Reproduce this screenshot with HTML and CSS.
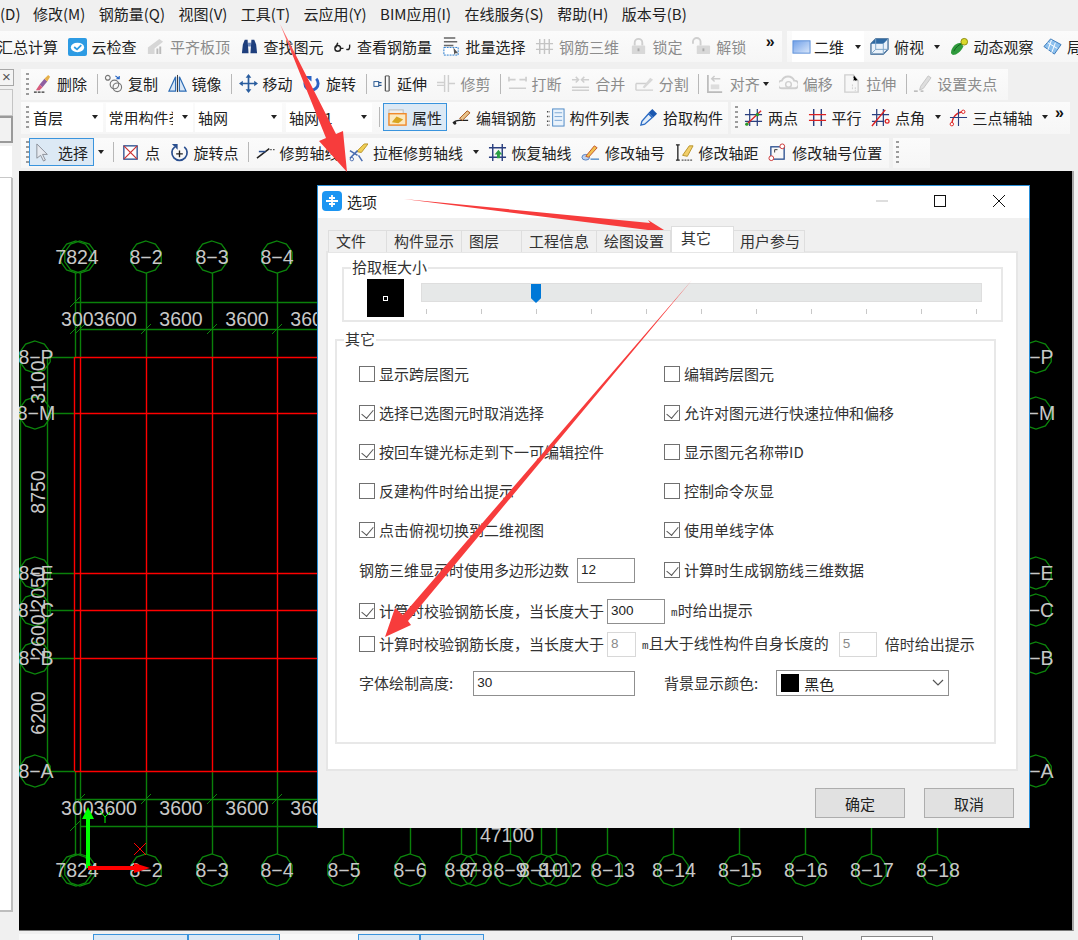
FILE: index.html
```html
<!DOCTYPE html>
<html lang="zh-CN">
<head>
<meta charset="utf-8">
<title>选项</title>
<link rel="stylesheet" href="styles.css">
</head>
<body>
<svg class="defs" width="0" height="0" aria-hidden="true">
  <symbol id="i-cloud" viewBox="0 0 20 20"><rect x="0" y="1" width="20" height="19" rx="2" fill="#2d9be3"/><ellipse cx="10" cy="11" rx="7" ry="5" fill="#fff"/><path d="M6.500 10.500l3 2.500 4.500-4.500" fill="none" stroke="#2d9be3" stroke-width="1.800"/></symbol>
  <symbol id="i-flush" viewBox="0 0 20 20"><path d="M2 11l12-9 4 3-9 7v6H2z" fill="#d6d6d6"/><path d="M11 18v-6h2v6zm3 0v-8h2v8z" fill="#bbb"/></symbol>
  <symbol id="i-binoc" viewBox="0 0 20 20"><path d="M2 17l1-9 2-5h3l1 14zM18 17l-1-9-2-5h-3l-1 14z" fill="#1f3f7d"/><rect x="8.500" y="6" width="3" height="4" fill="#6b86b8"/></symbol>
  <symbol id="i-glass" viewBox="0 0 20 20"><circle cx="5" cy="12" r="3" fill="none" stroke="#222" stroke-width="1.500"/><path d="M14 13c3 1 4-1 3.500-5M3 11l2-5M8 12h3" fill="none" stroke="#222" stroke-width="1.500"/></symbol>
  <symbol id="i-batch" viewBox="0 0 20 20"><path d="M2 1h12M2 5h14M2 9h10" stroke="#666" stroke-width="1.500"/><rect x="2" y="11" width="15" height="8" fill="#fff" stroke="#2277cc" stroke-dasharray="2 1"/><path d="M12 11l5 6-3 0-1 2z" fill="#555"/></symbol>
  <symbol id="i-grid3d" viewBox="0 0 20 20"><path d="M1 7h18M1 13h18M5 2v16M10 2v16M15 2v16" stroke="#c4c4c4" stroke-width="1.500"/></symbol>
  <symbol id="i-lock" viewBox="0 0 20 20"><path d="M6 9V6a4 4 0 018 0v3" fill="none" stroke="#cfcfcf" stroke-width="2"/><rect x="3" y="9" width="14" height="9" rx="1" fill="#d8d8d8"/><rect x="9" y="12" width="2" height="3" fill="#aaa"/></symbol>
  <symbol id="i-unlock" viewBox="0 0 20 20"><path d="M1 7V5a4 4 0 018 0v4" fill="none" stroke="#cfcfcf" stroke-width="2"/><rect x="5" y="9" width="14" height="9" rx="1" fill="#d8d8d8"/><rect x="11" y="12" width="2" height="3" fill="#aaa"/></symbol>
  <symbol id="i-2d" viewBox="0 0 20 20"><defs><linearGradient id="g2d" x1="0" y1="0" x2="1" y2="1"><stop offset="0" stop-color="#6f9fe8"/><stop offset="1" stop-color="#dbe8fb"/></linearGradient></defs><rect x="1" y="4" width="18" height="13" fill="url(#g2d)" stroke="#5b8ed8"/></symbol>
  <symbol id="i-cube" viewBox="0 0 20 20"><path d="M1 7l5-5h13v11l-5 5H1z" fill="#eaf2fa" stroke="#2d5c8c" stroke-width="1.200"/><path d="M1 7l5-5h13l-5 5z" fill="#2f6aa3"/><path d="M14 7v11M14 7l5-5M1 18l5-5h13M6 2v11" fill="none" stroke="#7aa3c7"/></symbol>
  <symbol id="i-orbit" viewBox="0 0 20 20"><path d="M1 17c0-6 5-11 11-11l2 4c-2 5-7 9-11 9z" fill="#2f9a3c"/><path d="M4 15c2-4 5-7 9-8" stroke="#0f5f1c" fill="none"/><circle cx="15" cy="5" r="3.500" fill="#d9d92a" stroke="#8a8a10"/></symbol>
  <symbol id="i-persp" viewBox="0 0 20 20"><path d="M1 10l7-8 11 6-7 10z" fill="#8cc0ee" stroke="#3a78b8"/><path d="M5 6l10 6M9 3l-4 11M13 6l-4 11" stroke="#fff"/></symbol>
  <symbol id="i-del" viewBox="0 0 20 20"><path d="M1 19h11" stroke="#333" stroke-width="1.300" stroke-dasharray="3 1"/><path d="M7 11l5-6 3 3-5 6z" fill="#8f5fa0"/><path d="M12 5l4-4 2 2-3 5z" fill="#e6b04a"/><path d="M3 17l4-6 3 3-3 3z" fill="#d75c7c"/></symbol>
  <symbol id="i-copy" viewBox="0 0 20 20"><circle cx="4" cy="4" r="2.500" fill="none" stroke="#777" stroke-width="1.200"/><circle cx="14" cy="14" r="4.500" fill="none" stroke="#777" stroke-width="1.200"/><circle cx="11" cy="11" r="4.500" fill="none" stroke="#777" stroke-width="1.200"/><path d="M12 2l4 3M16 2v3h-3" fill="none" stroke="#2060c0" stroke-width="1.200"/></symbol>
  <symbol id="i-mirror" viewBox="0 0 20 20"><path d="M10 1v18" stroke="#333"/><path d="M8 3L1 18h7z" fill="#d9e7f6" stroke="#2d6cb5" stroke-width="1.300"/><path d="M12 3l7 15h-7z" fill="#d9e7f6" stroke="#2d6cb5" stroke-width="1.300"/></symbol>
  <symbol id="i-move" viewBox="0 0 20 20"><path d="M10 2v16M2 10h16" stroke="#2a5d9e" stroke-width="1.800"/><path d="M10 0l3 4H7zM10 20l3-4H7zM0 10l4-3v6zM20 10l-4-3v6z" fill="#2a5d9e"/></symbol>
  <symbol id="i-rotate" viewBox="0 0 20 20"><path d="M5 5a7 7 0 1 0 10 0" fill="none" stroke="#2a62c4" stroke-width="3"/><path d="M3 2h7v6z" fill="#2a62c4"/></symbol>
  <symbol id="i-extend" viewBox="0 0 20 20"><path d="M1 9h8M1 12h8" stroke="#24558f" stroke-width="1.300"/><rect x="1" y="8" width="5" height="5" fill="#fff" stroke="#24558f"/><path d="M13 2v16M17 2v16" stroke="#555" stroke-width="1.300"/><path d="M13 2h4M13 18h4" stroke="#555"/></symbol>
  <symbol id="i-trim" viewBox="0 0 20 20"><path d="M8 1v18M12 1v18M0 9h8M0 12h8M12 10h7" stroke="#cfcfcf" stroke-width="1.500"/></symbol>
  <symbol id="i-break" viewBox="0 0 20 20"><path d="M1 6h7M12 6h7M1 15h18M1 3v5M19 3v5" stroke="#cfcfcf" stroke-width="1.800"/></symbol>
  <symbol id="i-merge" viewBox="0 0 20 20"><path d="M1 6h7M11 6h8M5 3l3 3-3 3M14 3l-3 3 3 3M1 14h18M1 17h18" fill="none" stroke="#cfcfcf" stroke-width="1.600"/></symbol>
  <symbol id="i-split" viewBox="0 0 20 20"><path d="M1 10h12M1 17h18M1 10v7" stroke="#cfcfcf" stroke-width="1.400"/><path d="M8 14l8-10 3 2-9 9z" fill="#d8d8d8"/></symbol>
  <symbol id="i-align" viewBox="0 0 20 20"><path d="M2 1v18h15" fill="none" stroke="#bbb" stroke-width="1.800"/><rect x="5" y="11" width="9" height="5" fill="#ddd"/><path d="M6 5h9M9 2L6 5l3 3" fill="none" stroke="#ccc" stroke-width="1.500"/></symbol>
  <symbol id="i-offset" viewBox="0 0 20 20"><path d="M3 15a4 4 0 010-8 7 7 0 0113 0 4 4 0 011 8z" fill="none" stroke="#cfcfcf" stroke-width="2"/><circle cx="10" cy="11" r="3" fill="none" stroke="#cfcfcf" stroke-width="1.500"/></symbol>
  <symbol id="i-stretch" viewBox="0 0 20 20"><path d="M3 1h9l5 6v12H3z" fill="#f7f7f7" stroke="#cfcfcf" stroke-width="1.400"/><path d="M12 1v6h5M11 11v6M14 14v4" stroke="#cfcfcf" stroke-dasharray="2 1"/></symbol>
  <symbol id="i-grip" viewBox="0 0 20 20"><path d="M1 18h4M8 18h3" stroke="#aaa" stroke-width="1.500"/><path d="M8 13l8-11 3 2-8 11-4 2z" fill="#dedede" stroke="#c4c4c4"/></symbol>
  <symbol id="i-prop" viewBox="0 0 20 20"><rect x="1" y="2" width="15" height="4" fill="#eee" stroke="#bbb"/><rect x="1" y="6" width="18" height="12" fill="#fbe9c2" stroke="#f08a2c" stroke-width="1.500"/><path d="M4 15l5-6 7 3-5 4z" fill="#d8a520"/></symbol>
  <symbol id="i-edit" viewBox="0 0 20 20"><path d="M1 16c2-3 5-3 7-3h9" fill="none" stroke="#222" stroke-width="1.500"/><path d="M8 11l8-8 3 2-8 8z" fill="#e8c38a" stroke="#a8551a"/><circle cx="3" cy="16" r="1.500" fill="#222"/></symbol>
  <symbol id="i-list" viewBox="0 0 20 20"><path d="M1 4h3M1 9h3M1 14h3M1 18h3" stroke="#444" stroke-width="1.500" stroke-dasharray="1.500 1"/><rect x="7" y="1" width="12" height="18" fill="#eaf3fc" stroke="#4a86c5"/><path d="M9 5h8M9 9h8M9 13h8" stroke="#7aa7d4"/></symbol>
  <symbol id="i-pick" viewBox="0 0 20 20"><path d="M2 18l1-4 7-8 4 4-8 7z" fill="#e4effa" stroke="#2c6cc4" stroke-width="1.400"/><path d="M10 5l4-4 5 5-4 4z" fill="#1c58b0"/></symbol>
  <symbol id="i-twopt" viewBox="0 0 20 20"><path d="M6 1v18M14 1v18M1 7h18M1 14h18" stroke="#2a3f7f" stroke-width="1.300"/><path d="M2 18L18 3" stroke="#d22" stroke-width="1.400"/><circle cx="3" cy="17" r="1.800" fill="#2a9a2a"/><circle cx="14" cy="7" r="1.800" fill="#2a9a2a"/></symbol>
  <symbol id="i-par" viewBox="0 0 20 20"><path d="M6 1v18M14 1v18" stroke="#2a3f7f" stroke-width="1.500"/><path d="M1 7h18M1 13h18" stroke="#d22" stroke-width="1.500"/></symbol>
  <symbol id="i-ang" viewBox="0 0 20 20"><path d="M6 1v18M13 1v18M1 7h18M1 14h13" stroke="#2a3f7f" stroke-width="1.300"/><path d="M1 19L15 2" stroke="#d22" stroke-width="1.500"/><circle cx="17" cy="14" r="2" fill="none" stroke="#d22" stroke-width="1.300"/></symbol>
  <symbol id="i-three" viewBox="0 0 20 20"><path d="M3 18c0-8 5-14 13-14" fill="none" stroke="#d22" stroke-width="1.500"/><path d="M10 1v18M1 10h18" stroke="#2a3f7f" stroke-width="1.200"/><circle cx="3" cy="17" r="1.800" fill="#fff" stroke="#d22"/><circle cx="15" cy="4" r="1.800" fill="#fff" stroke="#d22"/></symbol>
  <symbol id="i-cur" viewBox="0 0 20 20"><path d="M3 1v15l4-3 3 6 2-1-3-6h5z" fill="#e6eaf0" stroke="#8a8f99"/></symbol>
  <symbol id="i-point" viewBox="0 0 20 20"><rect x="3" y="3" width="14" height="14" fill="#fff" stroke="#2a4f8f" stroke-width="1.400"/><path d="M3 3l14 14M17 3L3 17" stroke="#c33" stroke-width="1.300"/></symbol>
  <symbol id="i-rotpt" viewBox="0 0 20 20"><path d="M5 4a8 8 0 1 0 10 0" fill="none" stroke="#2a4f8f" stroke-width="1.800"/><path d="M2 1h6v6z" fill="#2a4f8f"/><path d="M10 8v7M6.500 11.500h7" stroke="#222" stroke-width="1.400"/></symbol>
  <symbol id="i-trimax" viewBox="0 0 20 20"><path d="M1 16L14 6" stroke="#222" stroke-width="1.600"/><path d="M3 9h7" stroke="#2a4f8f" stroke-width="1.600"/><path d="M15 7h5" stroke="#444" stroke-dasharray="1.500 1.500" stroke-width="1.500"/></symbol>
  <symbol id="i-box" viewBox="0 0 20 20"><path d="M8 9l8-8h4l-7 9z" fill="#f0cf55" stroke="#b8932a"/><path d="M1 8l8 5M9 8l-8 8M10 13l4 6" stroke="#4a6db0" stroke-width="1.600"/><circle cx="3" cy="17" r="1.800" fill="none" stroke="#4a6db0"/></symbol>
  <symbol id="i-restore" viewBox="0 0 20 20"><path d="M5 1v18M15 1v18M1 5h18M1 15h18" stroke="#2a3f7f" stroke-width="1.500"/><path d="M11 7l4 5h-2.500v4h-3v-4H7z" fill="#2aa044"/></symbol>
  <symbol id="i-modno" viewBox="0 0 20 20"><ellipse cx="5" cy="15" rx="4" ry="3" fill="#bcd2f0" stroke="#5580c0"/><path d="M5 14l9-11 3 2-9 10z" fill="#f2c14f" stroke="#c4562c"/><path d="M10 17h9" stroke="#4a86c5" stroke-width="1.400"/></symbol>
  <symbol id="i-modsp" viewBox="0 0 20 20"><path d="M3 2v16M1 2h4M1 18h4" stroke="#222" stroke-width="1.400"/><path d="M8 13l7-10h4l-6 11z" fill="#f2cf6a" stroke="#b8932a"/><path d="M7 18h12" stroke="#555" stroke-dasharray="2 1" stroke-width="1.400"/></symbol>
  <symbol id="i-modpos" viewBox="0 0 20 20"><rect x="3" y="4" width="14" height="13" fill="none" stroke="#2a4f8f" stroke-width="1.400"/><circle cx="3.500" cy="16" r="2.500" fill="#fff" stroke="#c33"/><circle cx="15" cy="3.500" r="2.500" fill="#fff" stroke="#c33"/><path d="M7 7h3M7 7v3" stroke="#333"/></symbol>
</svg>

<nav class="menu">
  <span class="menu-first">(D)</span><span>修改(M)</span><span>钢筋量(Q)</span><span>视图(V)</span><span>工具(T)</span><span>云应用(Y)</span><span>BIM应用(I)</span><span>在线服务(S)</span><span>帮助(H)</span><span>版本号(B)</span>
</nav>

<div class="topbar">
  <div class="block block-main">
    <span class="tool first-tool">汇总计算</span>
    <span class="tool"><svg class="ic"><use href="#i-cloud"/></svg>云检查</span>
    <span class="tool off"><svg class="ic"><use href="#i-flush"/></svg>平齐板顶</span>
    <span class="tool"><svg class="ic"><use href="#i-binoc"/></svg>查找图元</span>
    <span class="tool"><svg class="ic"><use href="#i-glass"/></svg>查看钢筋量</span>
    <span class="tool"><svg class="ic"><use href="#i-batch"/></svg>批量选择</span>
    <span class="tool off"><svg class="ic"><use href="#i-grid3d"/></svg>钢筋三维</span>
    <span class="tool off"><svg class="ic"><use href="#i-lock"/></svg>锁定</span>
    <span class="tool off"><svg class="ic"><use href="#i-unlock"/></svg>解锁</span>
    <span class="more">»</span>
  </div>
  <div class="block block-view">
    <span class="tool tool-white"><svg class="ic"><use href="#i-2d"/></svg>二维<i class="caret caret-white"></i></span>
    <span class="tool"><svg class="ic"><use href="#i-cube"/></svg>俯视<i class="caret caret-inline"></i></span>
    <span class="tool"><svg class="ic"><use href="#i-orbit"/></svg>动态观察</span>
    <span class="tool"><svg class="ic"><use href="#i-persp"/></svg>局</span>
  </div>
</div>

<div class="workspace">
  <aside class="side">
    <div class="side-close">×</div>
    <div class="side-tab"></div>
    <div class="side-tab side-tab-on"></div>
    <div class="side-white"></div>
    <div class="side-list"></div>
  </aside>

  <div class="main">
    <div class="row row-edit">
      <div class="block block-edit">
        <i class="grip"></i>
        <span class="tool"><svg class="ic"><use href="#i-del"/></svg>删除</span><i class="sep"></i>
        <span class="tool"><svg class="ic"><use href="#i-copy"/></svg>复制</span>
        <span class="tool"><svg class="ic"><use href="#i-mirror"/></svg>镜像</span><i class="sep"></i>
        <span class="tool"><svg class="ic"><use href="#i-move"/></svg>移动</span>
        <span class="tool"><svg class="ic"><use href="#i-rotate"/></svg>旋转</span><i class="sep"></i>
        <span class="tool"><svg class="ic"><use href="#i-extend"/></svg>延伸</span>
        <span class="tool off"><svg class="ic"><use href="#i-trim"/></svg>修剪</span><i class="sep"></i>
        <span class="tool off"><svg class="ic"><use href="#i-break"/></svg>打断</span>
        <span class="tool off"><svg class="ic"><use href="#i-merge"/></svg>合并</span>
        <span class="tool off"><svg class="ic"><use href="#i-split"/></svg>分割</span><i class="sep"></i>
        <span class="tool off"><svg class="ic"><use href="#i-align"/></svg>对齐</span><i class="caret caret-align"></i>
        <span class="tool off"><svg class="ic"><use href="#i-offset"/></svg>偏移</span>
        <span class="tool off"><svg class="ic"><use href="#i-stretch"/></svg>拉伸</span><i class="sep"></i>
        <span class="tool off"><svg class="ic"><use href="#i-grip"/></svg>设置夹点</span>
      </div>
    </div>

    <div class="row row-layer">
      <div class="block block-layer">
        <i class="grip"></i>
        <span class="combo combo-floor">首层<i class="caret"></i></span>
        <span class="combo combo-wide"><span class="combo-clip">常用构件类型</span><i class="caret"></i></span>
        <span class="combo combo-wide combo-axis">轴网<i class="caret"></i></span>
        <span class="combo combo-last">轴网-1<i class="caret"></i></span>
        <i class="sep sep-layer"></i>
        <span class="tool tool-on tool-prop"><svg class="ic"><use href="#i-prop"/></svg>属性</span>
        <span class="tool"><svg class="ic"><use href="#i-edit"/></svg>编辑钢筋</span>
        <span class="tool"><svg class="ic"><use href="#i-list"/></svg>构件列表</span>
        <span class="tool"><svg class="ic"><use href="#i-pick"/></svg>拾取构件</span>
      </div>
      <div class="block block-axis">
        <i class="grip grip-axis"></i>
        <span class="tool"><svg class="ic"><use href="#i-twopt"/></svg>两点</span>
        <span class="tool"><svg class="ic"><use href="#i-par"/></svg>平行</span>
        <span class="tool"><svg class="ic"><use href="#i-ang"/></svg>点角</span><i class="caret caret-angle"></i>
        <span class="tool"><svg class="ic"><use href="#i-three"/></svg>三点辅轴</span><i class="caret caret-three"></i>
        <span class="more more-axis">»</span>
      </div>
    </div>

    <div class="row row-draw">
      <div class="block block-draw">
        <i class="grip grip-draw"></i>
        <span class="tool tool-on tool-select"><svg class="ic"><use href="#i-cur"/></svg>选择</span><i class="caret caret-select"></i>
        <i class="sep sep-select"></i>
        <span class="tool"><svg class="ic"><use href="#i-point"/></svg>点</span>
        <span class="tool"><svg class="ic"><use href="#i-rotpt"/></svg>旋转点</span><i class="sep"></i>
        <span class="tool"><svg class="ic"><use href="#i-trimax"/></svg>修剪轴线</span>
        <span class="tool"><svg class="ic"><use href="#i-box"/></svg>拉框修剪轴线</span><i class="caret caret-box"></i>
        <span class="tool"><svg class="ic"><use href="#i-restore"/></svg>恢复轴线</span>
        <span class="tool"><svg class="ic"><use href="#i-modno"/></svg>修改轴号</span>
        <span class="tool"><svg class="ic"><use href="#i-modsp"/></svg>修改轴距</span>
        <span class="tool"><svg class="ic"><use href="#i-modpos"/></svg>修改轴号位置</span>
      </div>
      <div class="block block-stub"><i class="grip"></i></div>
    </div>

    <div class="canvas">
      <svg class="cad" viewBox="19 171 1053 759" width="1053" height="759">
        <defs>
          <polygon id="hx" points="0,-16 9.400,-12.900 15.200,-4.900 15.200,4.900 9.400,12.900 0,16 -9.400,12.900 -15.200,4.900 -15.200,-4.900 -9.400,-12.900" fill="none" stroke="#0c860c" stroke-width="1.300"/>
          <path id="tk" d="M-5 5L5 -5" stroke="#0c860c"/>
        </defs>
        <g class="gridline" stroke="#0a800a" fill="none">
          <path d="M75.500 273V357M80.500 273V357M146.500 273V357M212.500 273V357M277.500 273V357M343.500 273V357M410.500 273V357"/>
          <path d="M75.500 771V855M80.500 771V855M146.500 771V854M212.500 771V854M277.500 771V854M343.500 771V854M410.500 771V854M461.500 771V854M476.500 771V854M510.500 771V854M541.500 771V854M556.500 771V854M607.500 771V854M673.500 771V854M739.500 771V854M805.500 771V854M871.500 771V854M937.500 771V854"/>
          <path d="M75 302.500H937M80 329.500H937M75 799.500H937M80 826.500H937"/>
          <path d="M20.500 357V771M47.500 357V771"/>
          <path d="M47 357.500H75M47 413.500H75M47 573.500H75M47 610.500H75M47 658.500H75M47 771.500H75"/>
        </g>
        <g class="gridline" stroke="#f00" fill="none">
          <path d="M75 357.500H1000M75 413.500H1000M75 573.500H1000M75 610.500H1000M75 658.500H1000M75 771.500H1000"/>
          <path d="M74.500 357V771M80.500 357V771M146.500 357V771M212.500 357V771M277.500 357V771M343.500 357V771"/>
        </g>
        <g>
          <use href="#tk" x="75" y="302"/><use href="#tk" x="75" y="329"/><use href="#tk" x="80" y="329"/><use href="#tk" x="146" y="329"/><use href="#tk" x="212" y="329"/><use href="#tk" x="277" y="329"/>
          <use href="#tk" x="80" y="799"/><use href="#tk" x="146" y="799"/><use href="#tk" x="212" y="799"/><use href="#tk" x="277" y="799"/><use href="#tk" x="75" y="826"/>
        </g>
        <g>
          <use href="#hx" x="76" y="257"/><use href="#hx" x="80" y="257"/><use href="#hx" x="146" y="257"/><use href="#hx" x="212" y="257"/><use href="#hx" x="277" y="257"/>
          <use href="#hx" x="76" y="870"/><use href="#hx" x="80" y="870"/><use href="#hx" x="146" y="870"/><use href="#hx" x="212" y="870"/><use href="#hx" x="277" y="870"/><use href="#hx" x="343" y="870"/><use href="#hx" x="410" y="870"/><use href="#hx" x="461" y="870"/><use href="#hx" x="476" y="870"/><use href="#hx" x="510" y="870"/><use href="#hx" x="541" y="870"/><use href="#hx" x="556" y="870"/><use href="#hx" x="607" y="870"/><use href="#hx" x="673" y="870"/><use href="#hx" x="739" y="870"/><use href="#hx" x="805" y="870"/><use href="#hx" x="871" y="870"/><use href="#hx" x="937" y="870"/>
          <use href="#hx" x="35" y="357"/><use href="#hx" x="35" y="413"/><use href="#hx" x="35" y="573"/><use href="#hx" x="35" y="610"/><use href="#hx" x="35" y="658"/><use href="#hx" x="35" y="771"/>
          <use href="#hx" x="1036" y="357"/><use href="#hx" x="1036" y="413"/><use href="#hx" x="1036" y="573"/><use href="#hx" x="1036" y="610"/><use href="#hx" x="1036" y="658"/><use href="#hx" x="1036" y="771"/>
        </g>
        <g class="lbl">
          <text x="77" y="264">7824</text><text x="146" y="264">8−2</text><text x="212" y="264">8−3</text><text x="277" y="264">8−4</text>
          <text x="77" y="877">7824</text><text x="146" y="877">8−2</text><text x="212" y="877">8−3</text><text x="277" y="877">8−4</text><text x="344" y="877">8−5</text><text x="410" y="877">8−6</text><text x="461" y="877">8−7</text><text x="476" y="877">8−8</text><text x="510" y="877">8−9</text><text x="541" y="877">8−10</text><text x="560" y="877">8−12</text><text x="613" y="877">8−13</text><text x="674" y="877">8−14</text><text x="740" y="877">8−15</text><text x="806" y="877">8−16</text><text x="872" y="877">8−17</text><text x="938" y="877">8−18</text>
          <text x="36" y="364">8−P</text><text x="36" y="420">8−M</text><text x="36" y="580">8−E</text><text x="36" y="617">8−C</text><text x="36" y="665">8−B</text><text x="36" y="778">8−A</text>
          <text x="1036" y="364">8−P</text><text x="1036" y="420">8−M</text><text x="1036" y="580">8−E</text><text x="1036" y="617">8−C</text><text x="1036" y="665">8−B</text><text x="1036" y="778">8−A</text>
          <text x="99" y="326">3003600</text><text x="181" y="326">3600</text><text x="247" y="326">3600</text><text x="312" y="326">3600</text>
          <text x="99" y="815">3003600</text><text x="181" y="815">3600</text><text x="247" y="815">3600</text><text x="312" y="815">3600</text>
          <text x="507" y="842">47100</text>
          <text transform="translate(45 382) rotate(-90)">3100</text>
          <text transform="translate(45 492) rotate(-90)">8750</text>
          <text transform="translate(45 588) rotate(-90)">2050</text>
          <text transform="translate(45 636) rotate(-90)">2600</text>
          <text transform="translate(45 713) rotate(-90)">6200</text>
        </g>
        <g>
          <path d="M86 868V819h-4L88 807l6 12h-4V868z" fill="#0f0"/>
          <path d="M88 866h46v-3l16 5-16 5v-3H88z" fill="#f00"/>
          <path d="M100 811l5 6 6-6M105 817v6" stroke="#0f0" fill="none"/>
          <path d="M134 843l12 12M146 843l-12 12" stroke="#f00" fill="none"/>
        </g>
      </svg>
    </div>

    <div class="status">
      <span class="st st-a"></span><span class="st st-on st-b"></span><span class="st st-on st-c"></span>
      <span class="st st-d"></span><span class="st st-on st-e"></span><span class="st st-on st-f"></span>
      <span class="st st-input st-g"></span><span class="st st-input st-h"></span>
    </div>
  </div>
</div>

<section class="dialog">
  <header class="titlebar">
    <svg class="dlg-icon" viewBox="0 0 20 20"><rect width="20" height="20" rx="4" fill="#1b95f2"/><path d="M10 4v12M4 10h12M7 7h6M7 13h6" fill="none" stroke="#fff" stroke-width="1.800"/></svg>
    <span class="dlg-title">选项</span>
    <svg class="win win-min" viewBox="0 0 12 12"><path d="M0 6h12" stroke="#bdbdbd"/></svg>
    <svg class="win win-max" viewBox="0 0 12 12"><rect x=".5" y=".5" width="11" height="11" fill="none" stroke="#111"/></svg>
    <svg class="win win-close" viewBox="0 0 12 12"><path d="M0 0l12 12M12 0L0 12" stroke="#111"/></svg>
  </header>
  <div class="tabs">
    <span class="tab tab-file">文件</span><span class="tab tab-comp">构件显示</span><span class="tab tab-layer">图层</span><span class="tab tab-proj">工程信息</span><span class="tab tab-draw">绘图设置</span><span class="tab tab-active">其它</span><span class="tab tab-user">用户参与</span>
  </div>
  <div class="panel">
    <div class="group group-pick">
      <span class="legend">拾取框大小</span>
      <div class="preview"><i class="preview-dot"></i></div>
      <div class="slider">
        <div class="track"><i class="thumb"></i></div>
        <div class="ticks"><i></i><i></i><i></i><i></i><i></i><i></i><i></i><i></i><i></i><i></i><i></i></div>
      </div>
    </div>
    <div class="group group-other">
      <span class="legend">其它</span>
      <div class="opt-row">
        <label class="cell"><i class="cb"></i>显示跨层图元</label>
        <label class="cell"><i class="cb"></i>编辑跨层图元</label>
      </div>
      <div class="opt-row">
        <label class="cell"><i class="cb cb-on"></i>选择已选图元时取消选择</label>
        <label class="cell"><i class="cb cb-on"></i>允许对图元进行快速拉伸和偏移</label>
      </div>
      <div class="opt-row">
        <label class="cell"><i class="cb cb-on"></i>按回车键光标走到下一可编辑控件</label>
        <label class="cell"><i class="cb"></i>显示图元名称带ID</label>
      </div>
      <div class="opt-row">
        <label class="cell"><i class="cb"></i>反建构件时给出提示</label>
        <label class="cell"><i class="cb"></i>控制命令灰显</label>
      </div>
      <div class="opt-row">
        <label class="cell"><i class="cb cb-on"></i>点击俯视切换到二维视图</label>
        <label class="cell"><i class="cb cb-on"></i>使用单线字体</label>
      </div>
      <div class="opt-row opt-row-6">
        <div class="cell"><span>钢筋三维显示时使用多边形边数</span><span class="box box-12">12</span></div>
        <label class="cell"><i class="cb cb-on"></i>计算时生成钢筋线三维数据</label>
      </div>
      <div class="opt-row opt-row-7">
        <i class="cb cb-on"></i><span>计算时校验钢筋长度&#xFF0C;当长度大于</span><span class="box box-300">300</span><span class="unit"><small>m</small>时给出提示</span>
      </div>
      <div class="opt-row opt-row-8">
        <i class="cb"></i><span>计算时校验钢筋长度&#xFF0C;当长度大于</span><span class="box box-off box-8">8</span><span class="unit"><small>m</small>且大于线性构件自身长度的</span><span class="box box-off box-5">5</span><span class="unit-end">倍时给出提示</span>
      </div>
      <div class="opt-row">
        <div class="cell"><span>字体绘制高度:</span><span class="box box-30">30</span></div>
        <div class="cell"><span>背景显示颜色:</span>
          <span class="select"><i class="swatch"></i>黑色<svg class="chev" viewBox="0 0 12 8"><path d="M1 1l5 5 5-5" fill="none" stroke="#555" stroke-width="1.200"/></svg></span>
        </div>
      </div>
    </div>
  </div>
  <footer class="footer">
    <button class="btn" type="button">确定</button>
    <button class="btn" type="button">取消</button>
  </footer>
</section>

<svg class="annot" viewBox="0 0 1078 940" width="1078" height="940" aria-hidden="true">
  <defs>
    <linearGradient id="fadeA" x1="0" y1="0" x2="0" y2="1"><stop offset="0" stop-color="#ff8a8a"/><stop offset=".25" stop-color="#f73c3c"/></linearGradient>
  </defs>
  <polygon points="280,24 336,134 343,131 347,172 319,141 326,138" fill="url(#fadeA)"/>
  <polygon points="404,199 650,223 648,220 672,235 646,238 648,230" fill="#f73c3c"/>
  <polygon points="692,280 403,615 395,608 385,637 411,625 408,621" fill="#f73c3c"/>
</svg>
</body>
</html>
```

FILE: styles.css
```css
* { box-sizing: border-box; }
html, body { margin: 0; padding: 0; }
body {
  width: 1078px;
  height: 940px;
  overflow: hidden;
  position: relative;
  background: #f0f0f0;
  color: #222;
  font-family: "Noto Sans CJK SC", "Liberation Sans", sans-serif;
  font-size: 15px;
  line-height: 1;
}
i { display: block; font-style: normal; }
.defs { position: absolute; }

/* Menu */
.menu {
  height: 31px;
  display: flex;
  align-items: center;
  gap: 13.500px;
  white-space: nowrap;
  padding-bottom: 5px;
}
.menu-first { margin-right: -1px; }

/* Toolbars */
.topbar { height: 31px; display: flex; overflow: hidden; }
.block {
  display: flex;
  align-items: center;
  background: linear-gradient(#fbfbfb, #f6f6f6);
  white-space: nowrap;
  overflow: hidden;
}
.block-main { width: 782px; height: 31px; position: relative; }
.block-view { width: 291px; height: 31px; margin-left: 5px; padding-left: 5px; }
.tool {
  display: inline-flex;
  align-items: center;
  gap: 5px;
  margin-right: 9.500px;
  flex: none;
}
.first-tool { margin-left: -2px; }
.tool.off { color: #8c8c8c; }
.ic { width: 19px; height: 19px; flex: none; }
.more { font: bold 16px "Liberation Sans", sans-serif; color: #111; align-self: flex-start; margin: 2px 0 0 10px; }
.tool-white {
  background: #fff;
  height: 31px;
  margin-right: 6px;
  position: relative;
  padding-right: 20px;
  gap: 3px;
}
.caret {
  width: 0;
  height: 0;
  border-left: 3.500px solid transparent;
  border-right: 3.500px solid transparent;
  border-top: 4px solid #222;
  flex: none;
}
.caret-white { position: absolute; right: 3px; top: 14px; }
.caret-inline { margin-left: 5px; }

.workspace { display: flex; height: 878px; }
.side { width: 19px; flex: none; padding-top: 7px; }
.side-close {
  width: 14px;
  height: 17px;
  border: 1px solid #a8a8a8;
  border-left: none;
  background: #f4f4f4;
  color: #555;
  font: 15px/14px "Liberation Sans", sans-serif;
  text-align: center;
}
.side-tab {
  width: 13px;
  height: 27px;
  margin-top: 3px;
  background: #f2f2f2;
  border: 1px solid #c4c4c4;
  border-left: none;
}
.side-tab + .side-tab { margin-top: 0; }
.side-tab-on { border: 2px solid #9a9a9a; border-left: none; }
.side-white { width: 12px; height: 32px; margin-top: 3px; background: #fff; border-bottom: 1px solid #c8c8c8; }
.side-list { width: 13px; height: 734px; background: #fff; border-right: 2px solid #bdbdbd; border-bottom: 2px solid #bdbdbd; }

.main { width: 1059px; overflow: hidden; }
.row { display: flex; margin-left: 2px; }
.row-edit { margin-top: 7px; height: 31px; }
.row-layer { margin-top: 2px; height: 32px; }
.row-draw { margin-top: 4px; height: 30px; }
.row .block { padding-bottom: 2px; }
.block-edit { width: 987px; padding-left: 5px; }
.block-layer { width: 707px; padding-left: 5px; }
.block-axis { width: 339px; margin-left: 3px; padding-left: 4px; }
.block-draw { width: 868px; padding-left: 5px; }
.block-stub { width: 37px; margin-left: 4px; padding-left: 3px; }

.grip {
  width: 3px;
  height: 22px;
  margin-right: 4px;
  flex: none;
  background: repeating-linear-gradient(#9c9c9c 0 2px, transparent 2px 5px);
}
.grip-axis { margin-right: 6px; }
.grip-draw { margin-right: 0; }
.sep { width: 1px; height: 20px; background: #b8b8b8; margin-right: 6.500px; flex: none; }
.sep-layer { margin: 0 3px 0 7px; }
.sep-select { margin: 0 7px 0 9px; }

.combo {
  display: flex;
  align-items: center;
  justify-content: space-between;
  height: 29px;
  background: #fff;
  padding: 0 5px 0 3px;
  margin-right: 2.500px;
  flex: none;
  width: 87px;
}
.combo-floor { width: 73px; margin-left: -3px; }
.combo-axis { margin-right: 4px; }
.combo-last { width: 86px; margin-right: 0; }
.combo-clip { width: 64px; overflow: hidden; white-space: nowrap; }

.tool-on {
  background: #dce9f5;
  border: 1px solid #3a94dd;
  height: 28px;
}
.tool-prop { padding: 0 4px 0 4px; margin-right: 5px; }
.tool-select { padding: 0 5px 0 4px; margin: 0 4px 0 0; }
.caret-select { margin-right: 0; }
.caret-align { margin: 0 10px 0 -6.500px; }
.caret-angle { margin: 0 8px 0 0; }
.caret-three { margin: 0; }
.caret-box { margin: 0 9px 0 0; }
.more-axis { margin-left: 7px; }

/* Canvas */
.canvas {
  width: 1055px;
  height: 760px;
  margin-top: 3px;
  background: #000;
  border-right: 2px solid #a8a8a8;
  border-bottom: 1px solid #777;
  overflow: hidden;
}
.cad { display: block; }
.gridline { stroke-width: 1.400; }
.lbl text {
  font: 19.500px "Liberation Sans", sans-serif;
  fill: #c8c8c8;
  text-anchor: middle;
}

/* Status bar */
.status { display: flex; height: 10px; padding-top: 3px; }
.st { display: block; height: 7px; flex: none; }
.st-a { width: 74px; background: #f8f8f8; }
.st-on { background: #dce9f5; border: 1px solid #3a94dd; border-bottom: none; }
.st-b { width: 95px; }
.st-c { width: 92px; }
.st-d { width: 78px; background: #f8f8f8; }
.st-e { width: 62px; }
.st-f { width: 64px; }
.st-input { height: 5px; margin-top: 2px; background: #fff; border: 1px solid #888; border-bottom: none; }
.st-g { width: 72px; margin-left: 247px; }
.st-h { width: 72px; margin-left: 58px; }

/* Dialog */
.dialog {
  position: absolute;
  left: 317px;
  top: 185px;
  width: 713px;
  height: 643px;
  background: #f0f0f0;
  border: 1px solid #2a8fd8;
  border-bottom: none;
  display: flex;
  flex-direction: column;
  color: #333;
}
.titlebar {
  height: 32px;
  background: #fff;
  display: flex;
  align-items: center;
  padding: 0 0 2px 4px;
  flex: none;
}
.dlg-icon { width: 20px; height: 20px; }
.dlg-title { margin-left: 5px; color: #222; }
.win { flex: none; width: 12px; height: 12px; }
.win-min { margin-left: auto; }
.win-max { margin-left: 46px; }
.win-close { margin-left: 47px; margin-right: 24px; }

.tabs {
  display: flex;
  align-items: flex-end;
  height: 26px;
  margin-top: 8px;
  padding-left: 10px;
  position: relative;
  z-index: 1;
  flex: none;
}
.tab {
  height: 22px;
  background: #f0f0f0;
  border: 1px solid #dedede;
  border-bottom: none;
  border-left: none;
  padding: 2px 0 0 7px;
  color: #333;
}
.tab-file { width: 59px; border-left: 1px solid #dedede; }
.tab-comp { width: 75px; }
.tab-layer { width: 60px; }
.tab-proj { width: 75px; }
.tab-draw { width: 74px; }
.tab-active { width: 63px; height: 26px; background: #fff; padding: 3px 0 0 9px; border-left: 1px solid #dedede; }
.tab-user { width: 71px; padding-left: 6px; }

.panel {
  width: 692px;
  height: 520px;
  margin: -1px 0 0 8px;
  background: #fff;
  border: 2px solid #e6e6e6;
  flex: none;
  padding-top: 14px;
}
.group { position: relative; border: 2px solid #e8e8e8; }
.legend {
  position: absolute;
  top: -10px;
  background: #fff;
  padding: 0 1px;
  color: #333;
}
.group-pick {
  width: 661px;
  height: 55px;
  margin-left: 14px;
  display: flex;
}
.group-pick .legend { left: 7px; }
.preview {
  width: 37px;
  height: 38px;
  margin: 10px 0 0 23px;
  background: #000;
  display: flex;
  align-items: center;
  justify-content: center;
}
.preview-dot { width: 5px; height: 5px; background: #000; border: 1px solid #fff; }
.slider { width: 561px; margin: 14px 0 0 17px; }
.track { width: 561px; height: 19px; background: #e6e8e8; border: 1px solid #dedede; position: relative; }
.thumb {
  position: absolute;
  left: 109px;
  top: 0;
  width: 10px;
  height: 19px;
  background: #0078d7;
  clip-path: polygon(0 0, 100% 0, 100% 75%, 50% 100%, 0 75%);
}
.ticks { display: flex; justify-content: space-between; padding: 0 5px; margin-top: 7px; }
.ticks i { width: 1px; height: 5px; background: #c8c8c8; }

.group-other {
  width: 661px;
  height: 405px;
  margin: 17px 0 0 7px;
  padding: 4px 0 0 22px;
}
.group-other .legend { left: 7px; }
.opt-row {
  display: flex;
  align-items: center;
  height: 22px;
  margin-top: 17px;
  white-space: nowrap;
}
.opt-row-6 { margin-top: 18px; }
.opt-row-7 { margin-top: 19px; }
.opt-row-8 { margin-top: 11px; }
.cell { display: flex; align-items: center; flex: none; }
.cell:first-child { width: 305px; }
.cb {
  width: 16px;
  height: 16px;
  border: 1.500px solid #707070;
  background: #fff;
  margin: 2px 4px 0 0;
  flex: none;
  position: relative;
}
.cb-on::after {
  content: "";
  position: absolute;
  left: 3.500px;
  top: 0.500px;
  width: 6px;
  height: 10px;
  border: solid #555;
  border-width: 0 1.500px 1.500px 0;
  transform: rotate(40deg);
}
.box {
  display: block;
  flex: none;
  height: 25px;
  margin-top: 2px;
  background: #fff;
  border: 1px solid #8f8f8f;
  font: 13.500px "Liberation Sans", sans-serif;
  padding: 3px 0 0 3px;
  color: #222;
}
.box-off { border-color: #d8d8d8; color: #8a8a8a; }
.box-12 { width: 58px; margin-left: 8px; }
.box-300 { width: 58px; margin-left: 3px; }
.box-8 { width: 29px; margin-left: 3px; }
.box-5 { width: 38px; margin-left: 10px; }
.box-30 { width: 162px; margin-left: 20px; }
.unit { margin-left: 6px; }
.unit small { font: 11px "Liberation Mono", monospace; }
.unit-end { margin-left: 8px; }
.select {
  display: flex;
  align-items: center;
  width: 173px;
  height: 26px;
  margin: 2px 0 0 18px;
  background: #fff;
  border: 1px solid #8f8f8f;
  padding: 0 4px;
  color: #222;
  flex: none;
}
.swatch { width: 18px; height: 18px; background: #000; margin-right: 5px; }
.chev { width: 12px; height: 8px; margin-left: auto; }

.footer {
  display: flex;
  justify-content: flex-end;
  gap: 19px;
  padding: 17px 15px 0 0;
}
.btn {
  width: 90px;
  height: 30px;
  background: #e1e1e1;
  border: 1px solid #adadad;
  border-radius: 0;
  color: #222;
  font: inherit;
  padding: 0;
}

/* Red annotation arrows drawn over the screenshot */
.annot { position: absolute; left: 0; top: 0; pointer-events: none; }
```
